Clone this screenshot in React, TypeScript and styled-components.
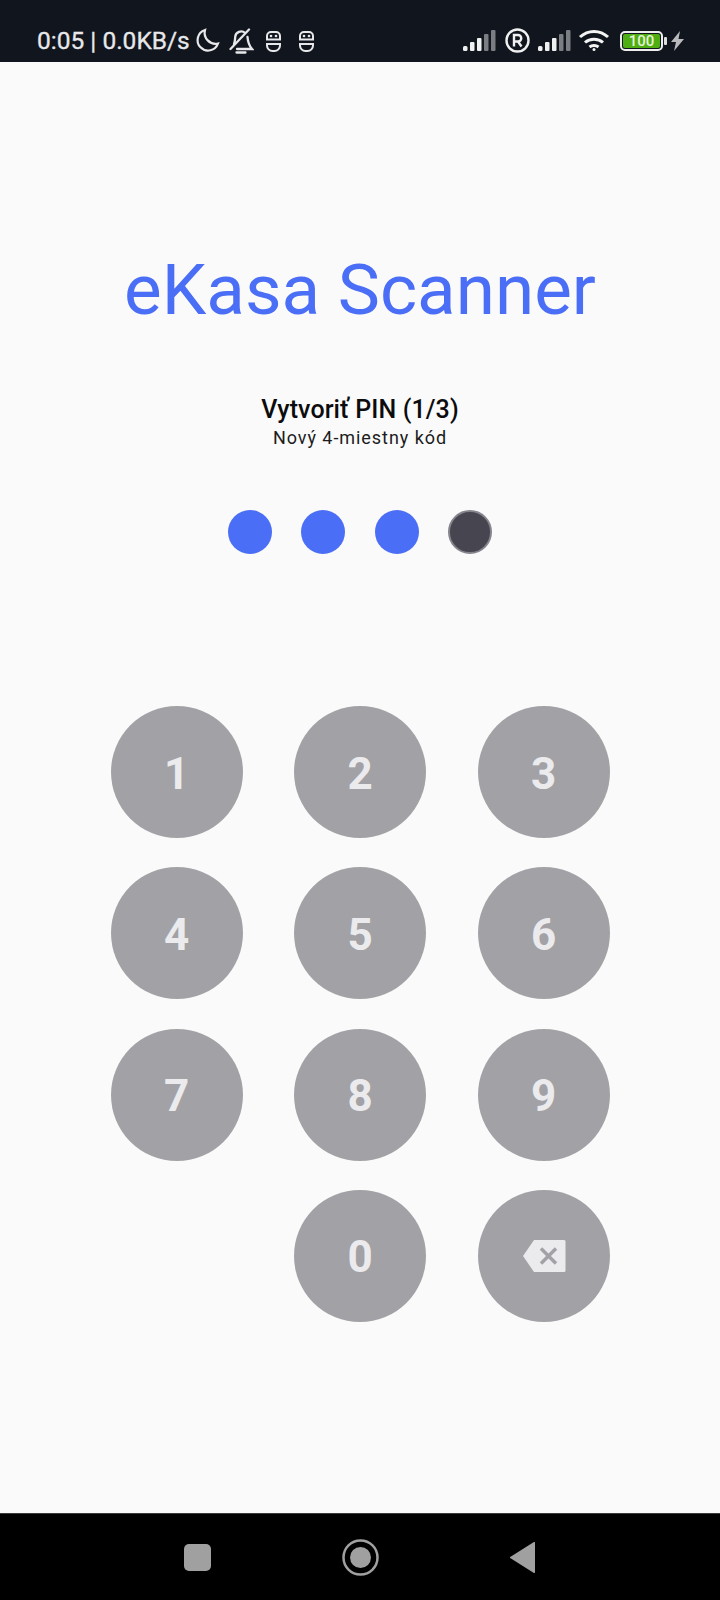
import styled, { createGlobalStyle } from 'styled-components';

const GlobalStyle = createGlobalStyle`
  html, body {
    margin: 0;
    padding: 0;
    background: #fafafa;
    font-family: Roboto, "Liberation Sans", sans-serif;
  }
`;

// Whole phone screen
const Screen = styled.div`
  width: 720px;
  height: 1600px;
  display: flex;
  flex-direction: column;
  background: #fafafa;
`;

// Top status bar
const StatusBar = styled.div`
  height: 62px;
  flex: none;
  box-sizing: border-box;
  padding: 19px 36px 0 37px;
  display: flex;
  justify-content: space-between;
  align-items: center;
  background: #10151e;
  color: #e8e8ea;
`;

const StatusGroup = styled.div`
  display: flex;
  align-items: center;
`;

const Clock = styled.span`
  font-size: 24.500px;
  font-weight: 400;
  white-space: nowrap;
  margin-right: 5px;
  -webkit-text-stroke: 0.3px #e8e8ea;
`;

const StatusIcon = styled.svg<{ $gap?: number }>`
  display: block;
  flex: none;
  margin-right: ${(p) => p.$gap ?? 0}px;
`;

// Battery indicator
const Battery = styled.div`
  width: 43px;
  height: 20px;
  box-sizing: border-box;
  border: 2px solid #eeeeee;
  border-radius: 5px;
  padding: 1px;
  display: flex;
  position: relative;
  margin-right: 8px;

  &::after {
    content: '';
    position: absolute;
    right: -6px;
    top: 4px;
    width: 3px;
    height: 8px;
    border-radius: 1px;
    background: #dddddd;
  }
`;

const BatteryFill = styled.div`
  flex: 1;
  background: #4fae12;
  border-radius: 2px;
  color: #e6f2d8;
  font-size: 15px;
  font-weight: 500;
  line-height: 14px;
  text-align: center;
`;

// Main page content
const Content = styled.main`
  flex: 1;
  display: flex;
  flex-direction: column;
  align-items: center;
`;

const Title = styled.h1`
  margin: 186px 0 0;
  font-size: 71px;
  line-height: 84px;
  font-weight: 400;
  color: #4a6ef5;
`;

const Heading = styled.div`
  margin-top: 62px;
  font-size: 25px;
  line-height: 32px;
  font-weight: 500;
  letter-spacing: 0.1px;
  color: #0c0c0e;
`;

const Subheading = styled.div`
  font-size: 18px;
  line-height: 24px;
  letter-spacing: 0.950px;
  color: #1c1c20;
`;

const Dots = styled.div`
  margin-top: 60px;
  display: flex;
  gap: 29.500px;
`;

const Dot = styled.div<{ $filled: boolean }>`
  width: 44px;
  height: 44px;
  box-sizing: border-box;
  border-radius: 50%;
  background: ${(p) => (p.$filled ? '#4a6ef5' : '#47454f')};
  border: ${(p) => (p.$filled ? 'none' : '2px solid #86848c')};
`;

// Number pad
const Keypad = styled.div`
  margin-top: 152px;
  display: grid;
  grid-template-columns: repeat(3, 132px);
  grid-auto-rows: 132px;
  column-gap: 51.500px;
  row-gap: 29.300px;
`;

const Key = styled.button<{ $column?: number }>`
  grid-column: ${(p) => p.$column ?? 'auto'};
  display: flex;
  align-items: center;
  justify-content: center;
  padding: 0;
  border: none;
  border-radius: 50%;
  background: #a2a1a5;
  color: #ebebee;
  font-family: Roboto, "Liberation Sans", sans-serif;
  font-size: 44px;
  font-weight: 700;
`;

// Digit label, sits a little under the circle's centre
const Digit = styled.span`
  padding-top: 3px;
`;

// Bottom navigation bar
const NavBar = styled.div`
  height: 87px;
  flex: none;
  box-sizing: border-box;
  border-top: 1px solid #3a3a3a;
  display: flex;
  align-items: center;
  background: #000000;
  color: #a0a0a0;
`;

const NavIcon = styled.svg<{ $left: number }>`
  display: block;
  flex: none;
  margin-left: ${(p) => p.$left}px;
`;

const Signal = ({ gap }: { gap: number }) => (
  <StatusIcon width="33" height="22" viewBox="0 0 33 22" $gap={gap}>
    <rect x="0" y="16" width="4.500" height="5" rx="1.500" fill="#f0f0f0" />
    <rect x="7" y="12" width="4.500" height="9" rx="1" fill="#f0f0f0" />
    <rect x="14" y="8" width="4.500" height="13" rx="1" fill="#f0f0f0" />
    <rect x="21" y="4" width="4.500" height="17" rx="1" fill="#7a7d82" />
    <rect x="28" y="0" width="4.500" height="21" rx="1" fill="#7a7d82" />
  </StatusIcon>
);

const SimFace = ({ gap }: { gap: number }) => (
  <StatusIcon width="17" height="22" viewBox="0 0 17 22" $gap={gap} fill="none" stroke="#e8e8ea" strokeWidth="2">
    <path d="M2 9.500V6a4 4 0 0 1 4-4h5a4 4 0 0 1 4 4v3.500" />
    <path d="M1 9.500h15" />
    <path d="M2 14h13v1.500a5.500 5.500 0 0 1-5.500 5.500h-2A5.500 5.500 0 0 1 2 15.500z" />
    <circle cx="6" cy="6" r="1.300" fill="#e8e8ea" stroke="none" />
    <circle cx="11" cy="6" r="1.300" fill="#e8e8ea" stroke="none" />
  </StatusIcon>
);

const keys = ['1', '2', '3', '4', '5', '6', '7', '8', '9'];

const App = () => {
  return (
    <Screen>
      <GlobalStyle />
      <StatusBar>
        <StatusGroup>
          <Clock>0:05 | 0.0KB/s</Clock>
          <StatusIcon width="25" height="25" viewBox="0 0 25 25" $gap={8} fill="none" stroke="#e8e8ea" strokeWidth="2.200">
            <path d="M10 2a10.500 10.500 0 1 0 13 13.500A11 11 0 0 1 10 2z" />
          </StatusIcon>
          <StatusIcon width="26" height="26" viewBox="0 0 26 26" $gap={11} fill="none" stroke="#e8e8ea" strokeWidth="2.300" strokeLinecap="round">
            <path d="M6 16c1-2 1-4 1.200-7a6 6 0 0 1 10-4" />
            <path d="M19.500 9c.300 4 1 8 4.500 12H9" />
            <path d="M2.500 21 21 1.500" />
            <path d="M8.500 24.500h9" />
          </StatusIcon>
          <SimFace gap={16} />
          <SimFace gap={0} />
        </StatusGroup>
        <StatusGroup>
          <Signal gap={9} />
          <StatusIcon width="25" height="25" viewBox="0 0 25 25" $gap={8} fill="none" stroke="#f0f0f0" strokeWidth="2.400">
            <circle cx="12.500" cy="12.500" r="11" />
            <path d="M9 18.500V7h4a3.200 3.200 0 0 1 0 6.500H9M13 13.500l3.500 5" />
          </StatusIcon>
          <Signal gap={7} />
          <StatusIcon width="32" height="23" viewBox="0 0 32 23" $gap={10} fill="none" stroke="#f4f4f4" strokeWidth="3">
            <path d="M2 8c8-7.500 20-7.500 28 0" />
            <path d="M7 13.500c5-4.500 13-4.500 18 0" />
            <path d="M11.500 18c2.500-2 6.500-2 9 0" />
            <circle cx="16" cy="20.500" r="1.500" fill="#f4f4f4" stroke="none" />
          </StatusIcon>
          <Battery>
            <BatteryFill>100</BatteryFill>
          </Battery>
          <StatusIcon width="13" height="20" viewBox="0 0 13 20">
            <path d="M9 0 0 11h5l-2 9 10-12H7.500z" fill="#b9babd" />
          </StatusIcon>
        </StatusGroup>
      </StatusBar>

      <Content>
        <Title>eKasa Scanner</Title>
        <Heading>Vytvoriť PIN (1/3)</Heading>
        <Subheading>Nový 4-miestny kód</Subheading>
        <Dots>
          <Dot $filled />
          <Dot $filled />
          <Dot $filled />
          <Dot $filled={false} />
        </Dots>
        <Keypad>
          {keys.map((k) => (
            <Key key={k}>
              <Digit>{k}</Digit>
            </Key>
          ))}
          <Key $column={2}>
            <Digit>0</Digit>
          </Key>
          <Key aria-label="Vymazať">
            <svg width="44" height="34" viewBox="0 0 44 34">
              <path d="M12 1h30a1.500 1.500 0 0 1 1.500 1.500v29a1.500 1.500 0 0 1-1.500 1.500H12L1 17z" fill="#ebebee" />
              <path d="M19 9.500l15 15M34 9.500l-15 15" stroke="#a2a1a5" strokeWidth="3.500" fill="none" />
            </svg>
          </Key>
        </Keypad>
      </Content>

      <NavBar>
        <NavIcon $left={184} width="27" height="27" viewBox="0 0 27 27">
          <rect width="27" height="27" rx="5" fill="currentColor" />
        </NavIcon>
        <NavIcon $left={131} width="37" height="37" viewBox="0 0 37 37">
          <circle cx="18.500" cy="18.500" r="17" fill="none" stroke="currentColor" strokeWidth="2.500" />
          <circle cx="18.500" cy="18.500" r="10.500" fill="currentColor" />
        </NavIcon>
        <NavIcon $left={131} width="26" height="31" viewBox="0 0 26 31">
          <path d="M25 1v29a1 1 0 0 1-1.500.8L1 16.500a1 1 0 0 1 0-2L23.500.2A1 1 0 0 1 25 1z" fill="currentColor" />
        </NavIcon>
      </NavBar>
    </Screen>
  );
};

export default App;
